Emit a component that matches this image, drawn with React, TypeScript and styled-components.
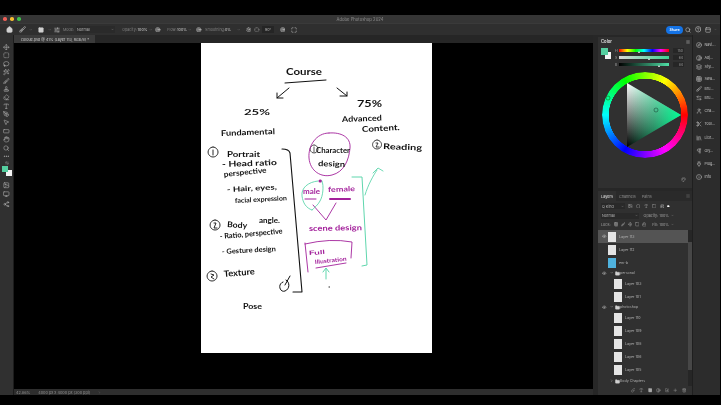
import React from 'react';
import styled, {createGlobalStyle} from 'styled-components';
import {
  Home, Brush, ChevronDown, ChevronRight, Search, CircleHelp, PanelTop, Settings, Move, SquareDashed, Lasso, Wand2,
  Stamp, Eraser, Type, PenTool, MousePointer2, RectangleHorizontal, Hand, Ellipsis, Share2, Monitor, Square, Eye,
  Folder, Compass, Contrast, Layers, Grid3x3, ArrowLeftRight, User, Scissors, Library, Pilcrow, Plug, Info, Menu,
  Image, Circle, Crosshair, Lock, Trash2, Plus, Link, FolderPlus, SlidersHorizontal, Palette, Target, Maximize, Printer
} from 'lucide-react';

const GlobalStyle = createGlobalStyle`
  html, body {
    margin: 0;
    padding: 0;
    background: #000;
    overflow: hidden;
  }
  * {
    box-sizing: border-box;
  }
`;

const Page = styled.div`
  width: 721px;
  height: 405px;
  padding: 15px 1px 10px 0;
  background: #000;
  font-family: 'Inter', 'Liberation Sans', sans-serif;
  font-size: 4.5px;
  color: #b4b4b4;
  filter: blur(0.4px);
`;

const AppWindow = styled.div`
  display: flex;
  flex-direction: column;
  width: 720px;
  height: 380px;
  background: #2e2e2e;
`;

const TitleBar = styled.div`
  display: flex;
  align-items: center;
  position: relative;
  height: 8px;
  padding-left: 3px;
  gap: 3.5px;
  background: #353535;
`;

const Light = styled.span<{$color: string}>`
  width: 3.5px;
  height: 3.5px;
  border-radius: 50%;
  background: ${({$color}) => $color};
`;

const WindowTitle = styled.span`
  position: absolute;
  left: 0;
  right: 0;
  text-align: center;
  color: #8e8e8e;
  font-size: 4.2px;
`;

const OptionsBar = styled.div`
  display: flex;
  align-items: center;
  height: 12px;
  background: #2f2f2f;
  border-top: 1px solid #3a3a3a;
`;

const OptionCell = styled.span<{$w: number; $bright?: boolean}>`
  display: flex;
  align-items: center;
  justify-content: center;
  flex: none;
  width: ${({$w}) => $w}px;
  color: ${({$bright}) => ($bright ? '#d0d0d0' : '#808080')};
  font-size: 3.7px;
  white-space: nowrap;
`;

const BlendSelect = styled.span`
  display: flex;
  align-items: center;
  justify-content: space-between;
  flex: none;
  width: 39px;
  height: 7px;
  padding: 0 1px;
  color: #b8b8b8;
  background: #2a2a2a;
  font-size: 3.7px;
`;

const AngleBox = styled(BlendSelect)`
  width: 12px;
  justify-content: center;
  background: #252525;
`;

const OptionsEnd = styled.div`
  display: flex;
  align-items: center;
  margin-left: auto;
  padding-right: 3px;
`;

const ShareButton = styled.span`
  display: flex;
  align-items: center;
  justify-content: center;
  width: 17px;
  height: 8px;
  border-radius: 4px;
  color: #fff;
  background: #1473e6;
  font-size: 3.6px;
  font-weight: 600;
`;

const Workspace = styled.div`
  display: flex;
  flex: 1;
  min-height: 0;
`;

const ToolBar = styled.div`
  display: flex;
  flex-direction: column;
  align-items: center;
  flex: none;
  width: 14px;
  padding-top: 8px;
  background: #303030;
  border-right: 1px solid #1c1c1c;
  color: #b4b4b4;
`;

const ToolSlot = styled.span<{$h?: number}>`
  display: flex;
  align-items: center;
  justify-content: center;
  flex: none;
  height: ${({$h}) => $h ?? 8.4}px;
`;

const ColorChips = styled.div`
  position: relative;
  flex: none;
  width: 10px;
  height: 11px;
  margin: 0 0 4px 0;
`;

const Chip = styled.span<{$back?: boolean}>`
  position: absolute;
  width: 6px;
  height: 6px;
  left: ${({$back}) => ($back ? 4 : 0)}px;
  top: ${({$back}) => ($back ? 4 : 0)}px;
  background: ${({$back}) => ($back ? '#f4f4f4' : '#55cfa0')};
  z-index: ${({$back}) => ($back ? 0 : 1)};
`;

const CenterColumn = styled.div`
  display: flex;
  flex-direction: column;
  flex: none;
  width: 579px;
`;

const TabStrip = styled.div`
  height: 8px;
  background: #262626;
`;

const DocTab = styled.div`
  display: flex;
  align-items: center;
  width: 81px;
  height: 8px;
  padding-left: 7px;
  color: #cfcfcf;
  background: #3b3b3b;
  font-size: 3.7px;
  white-space: nowrap;
`;

const Canvas = styled.div`
  flex: 1;
  min-height: 0;
  padding-left: 187px;
  background: #000;
`;

const Paper = styled.div`
  position: relative;
  width: 231px;
  height: 310px;
  background: #fff;
`;

const InkLayer = styled.svg`
  position: absolute;
  inset: 0;
  width: 231px;
  height: 310px;
  font-family: 'Lato', 'Liberation Sans', sans-serif;
  font-weight: 700;
`;

const StatusBar = styled.div`
  display: flex;
  align-items: center;
  flex: none;
  height: 6px;
  padding-left: 2px;
  gap: 8px;
  color: #8e8e8e;
  background: #2e2e2e;
  font-size: 3.8px;
`;

const RightColumn = styled.div`
  display: flex;
  flex: none;
  width: 127px;
  padding-left: 5px;
  background: #272727;
`;

const PanelColumn = styled.div`
  display: flex;
  flex-direction: column;
  flex: none;
  width: 94px;
  padding-top: 2px;
`;

const ColorPanel = styled.section`
  flex: none;
  height: 151px;
  margin-bottom: 3px;
  background: #303030;
`;

const PanelHeader = styled.div`
  display: flex;
  align-items: center;
  justify-content: space-between;
  height: 9px;
  padding: 0 2px 0 3px;
  color: #e0e0e0;
  font-size: 4.2px;
  font-weight: 600;
`;

const SwatchRow = styled.div`
  display: flex;
  height: 26px;
  padding: 2px 0 0 3px;
`;

const SwatchBox = styled.div`
  position: relative;
  flex: none;
  width: 11px;
  height: 11px;
`;

const BigChip = styled.span<{$back?: boolean}>`
  position: absolute;
  width: 6.5px;
  height: 6.5px;
  left: ${({$back}) => ($back ? 3.5 : 0)}px;
  top: ${({$back}) => ($back ? 4 : 0)}px;
  background: ${({$back}) => ($back ? '#f4f4f4' : '#55cfa0')};
  z-index: ${({$back}) => ($back ? 0 : 1)};
`;

const SliderStack = styled.div`
  display: flex;
  flex-direction: column;
  gap: 4px;
  margin-left: 3px;
  padding-top: 1px;
`;

const SliderRow = styled.div`
  display: flex;
  align-items: center;
  height: 3px;
  gap: 1px;
  font-size: 3.6px;
  color: #a0a0a0;
`;

const SliderLabel = styled.span`
  width: 3px;
`;

const SliderTrack = styled.div<{$fill: string}>`
  position: relative;
  width: 50px;
  height: 3px;
  background: ${({$fill}) => $fill};
`;

const SliderKnob = styled.span`
  position: absolute;
  top: 2px;
  width: 0;
  height: 0;
  border-left: 1.6px solid transparent;
  border-right: 1.6px solid transparent;
  border-bottom: 2.4px solid #eee;
  margin-left: -1.6px;
`;

const SliderValue = styled.span`
  display: flex;
  align-items: center;
  justify-content: flex-end;
  width: 11px;
  height: 5px;
  margin-left: 3px;
  padding-right: 1px;
  color: #9a9a9a;
  background: #262626;
  font-size: 3.4px;
`;

const WheelSlot = styled.div`
  position: relative;
  width: 86px;
  height: 86px;
  margin-left: 4px;
`;

const HueRing = styled.div`
  position: absolute;
  inset: 0;
  border-radius: 50%;
  background: conic-gradient(from 90deg, #f00, #f0f, #00f, #0ff, #0f0, #ff0, #f00);
  mask: radial-gradient(circle, transparent 36px, #000 36.5px);
`;

const WheelDrawing = styled.svg`
  position: absolute;
  inset: 0;
  width: 86px;
  height: 86px;
`;

const CornerIcon = styled.div`
  display: flex;
  justify-content: flex-end;
  padding: 19px 6px 0 0;
  color: #8a8a8a;
`;

const LayersPanel = styled.section`
  display: flex;
  flex-direction: column;
  flex: 1;
  min-height: 0;
  background: #303030;
`;

const LayerTabs = styled.div`
  display: flex;
  align-items: center;
  flex: none;
  height: 10px;
  padding-right: 2px;
  background: #2a2a2a;
`;

const LayerTab = styled.span<{$active?: boolean}>`
  display: flex;
  align-items: center;
  height: 10px;
  padding: 0 3px;
  color: ${({$active}) => ($active ? '#e4e4e4' : '#8e8e8e')};
  background: ${({$active}) => ($active ? '#303030' : 'transparent')};
  font-size: 3.8px;
`;

const PanelMenu = styled.span`
  display: flex;
  margin-left: auto;
  color: #8a8a8a;
`;

const ControlRow = styled.div<{$h: number}>`
  display: flex;
  align-items: center;
  flex: none;
  height: ${({$h}) => $h}px;
  padding: 0 3px;
  gap: 3px;
  color: #a0a0a0;
  font-size: 3.7px;
`;

const MiniSelect = styled.span<{$w: number}>`
  display: flex;
  align-items: center;
  justify-content: space-between;
  flex: none;
  width: ${({$w}) => $w}px;
  height: 6px;
  padding: 0 1px;
  color: #b8b8b8;
  background: #292929;
`;

const RowTools = styled.span<{$gap: number}>`
  display: flex;
  align-items: center;
  gap: ${({$gap}) => $gap}px;
  color: #b0b0b0;
`;

const ControlEnd = styled.span`
  display: flex;
  align-items: center;
  gap: 2px;
  margin-left: auto;
  padding-right: 15px;
`;

const LayerBody = styled.div`
  display: flex;
  flex: 1;
  min-height: 0;
  margin-top: 1px;
`;

const LayerList = styled.div`
  flex: none;
  width: 90px;
`;

const LayerRowBox = styled.div<{$selected?: boolean; $depth: number}>`
  display: flex;
  align-items: center;
  height: 13px;
  padding-left: ${({$depth}) => $depth}px;
  background: ${({$selected}) => ($selected ? '#545454' : 'transparent')};
  color: #b4b4b4;
  font-size: 3.6px;
`;

const GroupRow = styled.div<{$tall?: boolean}>`
  display: flex;
  align-items: center;
  height: ${({$tall}) => ($tall ? 10 : 8)}px;
  padding-left: 3px;
  color: #b0b0b0;
  font-size: 3.6px;
`;

const EyeSlot = styled.span`
  display: flex;
  justify-content: center;
  flex: none;
  width: 7px;
  color: #c8c8c8;
`;

const Thumb = styled.span<{$blue?: boolean}>`
  flex: none;
  width: 8px;
  height: 10px;
  margin-right: 3px;
  background: ${({$blue}) => ($blue ? '#4fb2de' : '#e4e4e4')};
`;

const FolderSlot = styled.span`
  display: flex;
  align-items: center;
  flex: none;
  gap: 1px;
  width: 12px;
  padding-left: 2px;
  color: #d0d0d0;
`;

const ScrollTrack = styled.div`
  flex: none;
  width: 4px;
  padding-top: 12px;
  background: #262626;
`;

const ScrollThumb = styled.div`
  height: 128px;
  background: #474747;
`;

const LayerFooter = styled.div`
  display: flex;
  align-items: center;
  justify-content: flex-end;
  flex: none;
  height: 9px;
  padding-right: 6px;
  gap: 4px;
  color: #a8a8a8;
`;

const Dock = styled.div`
  display: flex;
  flex-direction: column;
  flex: none;
  width: 28px;
  padding: 7px 0 0 3px;
  background: #2c2c2c;
  border-left: 1px solid #1f1f1f;
`;

const DockItem = styled.div<{$h: number}>`
  display: flex;
  align-items: flex-start;
  flex: none;
  height: ${({$h}) => $h}px;
  gap: 2.5px;
  color: #c0c0c0;
  font-size: 3.7px;
  line-height: 6px;
`;

const tools = [Move, SquareDashed, Lasso, Wand2, Brush, Stamp, Eraser, Type, PenTool, MousePointer2, RectangleHorizontal, Hand, Search, Ellipsis];

const dockItems: Array<{icon: typeof Move; label: string; h: number}> = [
  {icon: Compass, label: 'Navi...', h: 13},
  {icon: Contrast, label: 'Adj...', h: 9},
  {icon: Layers, label: 'Styl...', h: 12},
  {icon: Grid3x3, label: 'Swa...', h: 10},
  {icon: Brush, label: 'Bru...', h: 9},
  {icon: ArrowLeftRight, label: 'Bru...', h: 13},
  {icon: User, label: 'Cha...', h: 13},
  {icon: Scissors, label: 'Tool...', h: 14},
  {icon: Library, label: 'Libr...', h: 13},
  {icon: Pilcrow, label: 'Gly...', h: 13},
  {icon: Plug, label: 'Plug...', h: 13},
  {icon: Info, label: 'Info', h: 13}
];

type LayerEntry = {label: string; eye?: boolean; selected?: boolean; blue?: boolean; depth?: number; group?: boolean; collapsed?: boolean; tall?: boolean};

const layerEntries: LayerEntry[] = [
  {label: 'Layer 113', eye: true, selected: true},
  {label: 'Layer 112'},
  {label: 'em-b', blue: true},
  {label: 'personal', eye: true, group: true},
  {label: 'Layer 103', depth: 1},
  {label: 'Layer 101', depth: 1},
  {label: 'photoshop', eye: true, group: true},
  {label: 'Layer 110', depth: 1},
  {label: 'Layer 109', depth: 1},
  {label: 'Layer 108', depth: 1},
  {label: 'Layer 106', depth: 1},
  {label: 'Layer 105', depth: 1},
  {label: 'Body Chapters', group: true, collapsed: true, tall: true}
];

const BLACK = '#111';
const PURPLE = '#a3219b';
const GREEN = '#5fd6ad';

// coordinates are taken in screen pixels, the viewBox shifts them onto the sheet
const notes: Array<{t: string; x: number; y: number; w: number; s: number; r?: number; c?: string}> = [
  {t: 'Course', x: 286, y: 75, w: 36, s: 10},
  {t: '25%', x: 244, y: 115, w: 26, s: 9},
  {t: '75%', x: 357, y: 107, w: 25, s: 10},
  {t: 'Fundamental', x: 221, y: 136, w: 54, s: 9, r: -2},
  {t: 'Advanced', x: 342, y: 122, w: 40, s: 9, r: -2},
  {t: 'Content.', x: 362, y: 132, w: 38, s: 9, r: -3},
  {t: 'Portrait', x: 227, y: 157, w: 33, s: 9},
  {t: '- Head ratio', x: 222, y: 167, w: 55, s: 9, r: -2},
  {t: 'perspective', x: 224, y: 177, w: 43, s: 8.5, r: -6},
  {t: '- Hair, eyes,', x: 227, y: 192, w: 50, s: 8, r: -3},
  {t: 'facial expression', x: 235, y: 203, w: 52, s: 7.5, r: -3},
  {t: 'Body', x: 227, y: 227, w: 20, s: 9, r: 4},
  {t: 'angle.', x: 259, y: 223, w: 21, s: 8},
  {t: '- Ratio, perspective', x: 220, y: 239, w: 63, s: 8.5, r: -5},
  {t: '- Gesture design', x: 222, y: 254, w: 54, s: 8, r: -3},
  {t: 'Texture', x: 224, y: 277, w: 31, s: 10, r: -5},
  {t: 'Pose', x: 243, y: 309, w: 19, s: 7.5},
  {t: 'Character', x: 316, y: 153, w: 34, s: 8},
  {t: 'design', x: 318, y: 166, w: 27, s: 8.5, r: 2},
  {t: 'Reading', x: 383, y: 149, w: 39, s: 9, r: 2},
  {t: 'male', x: 303, y: 194, w: 17, s: 7.5, c: PURPLE},
  {t: 'female', x: 328, y: 192, w: 27, s: 8, c: PURPLE, r: -2},
  {t: 'scene design', x: 309, y: 231, w: 53, s: 8.5, c: PURPLE, r: -1},
  {t: 'Full', x: 309, y: 255, w: 16, s: 6.5, c: PURPLE, r: -4},
  {t: 'Illustration', x: 315, y: 264, w: 32, s: 6.5, c: PURPLE, r: -6}
];

const strokes: Array<{d: string; c: string; w?: number}> = [
  {d: 'M285 83 L326 80', c: BLACK},
  {d: 'M289 88 L277 98 M277 93 L277 98 L283 98', c: BLACK},
  {d: 'M337 88 L347 96 M347 92 L347 96 L340 96', c: BLACK},
  {d: 'M282 149 Q289 149 290 153 L302 292 L293 292', c: BLACK, w: 1.1},
  {d: 'M290 276 L285 285 M283 282 C277 284 280 293 285 291 C290 289 290 282 286 280', c: BLACK, w: 1},
  {d: 'M213 147 A5 5 0 1 0 213.1 147 M213 150 L213 155', c: BLACK, w: 0.9},
  {d: 'M215 220 A5 5 0 1 0 215.1 220 M214 223 L216 223 L214 228 L217 228', c: BLACK, w: 0.9},
  {d: 'M212 271 A5 5 0 1 0 212.1 271 M211 274 L214 275 L211 277 L214 279', c: BLACK, w: 0.9},
  {d: 'M377 140 A4.5 4.5 0 1 0 377.1 140 M376 143 L378 143 L376 147 L379 147', c: BLACK, w: 0.8},
  {d: 'M314 145 A4 4 0 1 0 314.1 145 M314 147 L314 152', c: BLACK, w: 0.7},
  {d: 'M329 133 C316 133 308 146 309 158 C310 171 321 178 332 175 C344 172 349 160 350 148 C351 137 341 132 329 133', c: PURPLE, w: 0.9},
  {d: 'M305 199 L316 199', c: PURPLE, w: 1},
  {d: 'M330 199 L350 199', c: PURPLE, w: 2},
  {d: 'M313 205 L326 220 L336 203', c: PURPLE, w: 0.9},
  {d: 'M320 181 L320.5 181', c: PURPLE, w: 3},
  {d: 'M305 244 Q330 238 352 242 L351 258 M305 243 L308 272 M316 268 L346 263', c: PURPLE, w: 0.9},
  {d: 'M318 181 C308 182 301 188 302 196 C303 203 306 208 312 210', c: GREEN, w: 0.9},
  {d: 'M322 181 C324 186 323 196 320 201 C318 205 314 208 312 210', c: GREEN, w: 0.9},
  {d: 'M352 177 L362 177 L367 265 L362 266', c: GREEN, w: 1},
  {d: 'M365 195 C368 185 373 176 377 170 M373 173 L378 168 L383 171', c: GREEN, w: 0.9},
  {d: 'M326 279 L326 269 M323 272 L326 268 L329 272', c: GREEN, w: 1},
  {d: 'M329 287 L329.5 287', c: BLACK, w: 1}
];

const Ink: React.FunctionComponent = () => (
  <InkLayer viewBox="201 43 231 310">
    {strokes.map((s, i) => (
      <path key={i} d={s.d} stroke={s.c} strokeWidth={s.w ?? 1} fill="none" strokeLinecap="round" strokeLinejoin="round" />
    ))}
    {notes.map((n) => (
      <text
        key={n.t}
        x={n.x}
        y={n.y}
        fontSize={n.s * 0.88}
        fill={n.c ?? BLACK}
        textLength={n.w}
        lengthAdjust="spacingAndGlyphs"
        transform={n.r ? `rotate(${n.r} ${n.x} ${n.y})` : undefined}
      >
        {n.t}
      </text>
    ))}
  </InkLayer>
);

const ColorWheel: React.FunctionComponent = () => (
  <WheelSlot>
    <HueRing />
    <WheelDrawing viewBox="0 0 86 86">
      <defs>
        <linearGradient id="valueRamp" x1="0" y1="0" x2="0" y2="1">
          <stop offset="0" stopColor="#fff" />
          <stop offset="1" stopColor="#000" />
        </linearGradient>
        <linearGradient id="hueRamp" x1="0" y1="0" x2="1" y2="0">
          <stop offset="0" stopColor="#00ff95" stopOpacity="0" />
          <stop offset="0.5" stopColor="#00e888" stopOpacity="0.45" />
          <stop offset="1" stopColor="#00ff95" />
        </linearGradient>
      </defs>
      <polygon points="25,11 79,43 25,75" fill="url(#valueRamp)" />
      <polygon points="25,11 79,43 25,75" fill="url(#hueRamp)" />
      <circle cx="54" cy="38" r="2" fill="none" stroke="#1b4d3a" strokeWidth="0.6" />
      <circle cx="6" cy="26" r="2" fill="none" stroke="#1a6b1a" strokeWidth="0.6" />
    </WheelDrawing>
  </WheelSlot>
);

const LayerItem: React.FunctionComponent<{entry: LayerEntry}> = ({entry}) => {
  const eye = <EyeSlot>{entry.eye && <Eye size={4.5} />}</EyeSlot>;
  if (entry.group) {
    return (
      <GroupRow $tall={entry.tall}>
        {eye}
        <FolderSlot>
          {entry.collapsed ? <ChevronRight size={3.5} /> : <ChevronDown size={3.5} />}
          <Folder size={5} fill="currentColor" />
        </FolderSlot>
        {entry.label}
      </GroupRow>
    );
  }
  return (
    <LayerRowBox $selected={entry.selected} $depth={entry.depth ? 9 : 3}>
      {eye}
      <Thumb $blue={entry.blue} />
      {entry.label}
    </LayerRowBox>
  );
};

const App: React.FunctionComponent = () => (
  <Page>
    <GlobalStyle />
    <AppWindow>
      <TitleBar>
        <Light $color="#ee5f57" />
        <Light $color="#f5bd30" />
        <Light $color="#3fc24b" />
        <WindowTitle>Adobe Photoshop 2024</WindowTitle>
      </TitleBar>
      <OptionsBar>
        <OptionCell $w={18} $bright><Home size={7} fill="currentColor" /></OptionCell>
        <OptionCell $w={9} $bright><Brush size={7} /></OptionCell>
        <OptionCell $w={7}><ChevronDown size={3.5} /></OptionCell>
        <OptionCell $w={13} $bright><Square size={6} fill="currentColor" /></OptionCell>
        <OptionCell $w={5}><ChevronDown size={3.5} /></OptionCell>
        <OptionCell $w={9} $bright><SlidersHorizontal size={6} /></OptionCell>
        <OptionCell $w={15}>Mode:</OptionCell>
        <BlendSelect>Normal<ChevronDown size={3} /></BlendSelect>
        <OptionCell $w={7} />
        <OptionCell $w={15}>Opacity:</OptionCell>
        <OptionCell $w={11} $bright>100%</OptionCell>
        <OptionCell $w={6}><ChevronDown size={3.5} /></OptionCell>
        <OptionCell $w={8} $bright><Target size={5.5} /></OptionCell>
        <OptionCell $w={5} />
        <OptionCell $w={10}>Flow:</OptionCell>
        <OptionCell $w={10} $bright>100%</OptionCell>
        <OptionCell $w={5}><ChevronDown size={3.5} /></OptionCell>
        <OptionCell $w={14} $bright><Target size={5.5} /></OptionCell>
        <OptionCell $w={1} />
        <OptionCell $w={16}>Smoothing:</OptionCell>
        <OptionCell $w={10} $bright>0%</OptionCell>
        <OptionCell $w={12}><ChevronDown size={3.5} /></OptionCell>
        <OptionCell $w={7} $bright><Settings size={5.5} /></OptionCell>
        <OptionCell $w={10}><Crosshair size={5.5} /></OptionCell>
        <AngleBox>90°</AngleBox>
        <OptionCell $w={17} $bright><Target size={5.5} /></OptionCell>
        <OptionCell $w={6} $bright><Maximize size={6} /></OptionCell>
        <OptionsEnd>
          <ShareButton>Share</ShareButton>
          <OptionCell $w={10} $bright><Search size={6} /></OptionCell>
          <OptionCell $w={10} $bright><CircleHelp size={6.5} /></OptionCell>
          <OptionCell $w={10} $bright><PanelTop size={6} /></OptionCell>
          <OptionCell $w={4}><ChevronDown size={3} /></OptionCell>
        </OptionsEnd>
      </OptionsBar>
      <Workspace>
        <ToolBar>
          {tools.map((Icon, i) => (
            <ToolSlot key={i}><Icon size={6.5} /></ToolSlot>
          ))}
          <ToolSlot $h={6}><ArrowLeftRight size={4} /></ToolSlot>
          <ColorChips>
            <Chip />
            <Chip $back />
          </ColorChips>
          <ToolSlot><Image size={6.5} /></ToolSlot>
          <ToolSlot><Monitor size={6.5} /></ToolSlot>
          <ToolSlot $h={11}><Share2 size={6.5} /></ToolSlot>
        </ToolBar>
        <CenterColumn>
          <TabStrip>
            <DocTab>coloue.psd @ 41% (Layer 113, RGB/8) *</DocTab>
          </TabStrip>
          <Canvas>
            <Paper>
              <Ink />
            </Paper>
          </Canvas>
          <StatusBar>
            <span>42.86%</span>
            <span>4000 px x 4000 px (300 ppi)</span>
            <ChevronRight size={3} />
          </StatusBar>
        </CenterColumn>
        <RightColumn>
          <PanelColumn>
            <ColorPanel>
              <PanelHeader>Color<Menu size={4} /></PanelHeader>
              <SwatchRow>
                <SwatchBox>
                  <BigChip />
                  <BigChip $back />
                </SwatchBox>
                <SliderStack>
                  <SliderRow>
                    <SliderLabel>H</SliderLabel>
                    <SliderTrack $fill="linear-gradient(90deg,#f00,#ff0,#0f0,#0ff,#00f,#f0f,#f00)">
                      <SliderKnob style={{left: '42%'}} />
                    </SliderTrack>
                    <SliderValue>150</SliderValue>
                  </SliderRow>
                  <SliderRow>
                    <SliderLabel>S</SliderLabel>
                    <SliderTrack $fill="linear-gradient(90deg,#d8d8d8,#3bd493)">
                      <SliderKnob style={{left: '62%'}} />
                    </SliderTrack>
                    <SliderValue>64</SliderValue>
                  </SliderRow>
                  <SliderRow>
                    <SliderLabel>B</SliderLabel>
                    <SliderTrack $fill="linear-gradient(90deg,#000,#4fe0a6)">
                      <SliderKnob style={{left: '82%'}} />
                    </SliderTrack>
                    <SliderValue>84</SliderValue>
                  </SliderRow>
                </SliderStack>
              </SwatchRow>
              <ColorWheel />
              <CornerIcon><Palette size={5} /></CornerIcon>
            </ColorPanel>
            <LayersPanel>
              <LayerTabs>
                <LayerTab $active>Layers</LayerTab>
                <LayerTab>Channels</LayerTab>
                <LayerTab>Paths</LayerTab>
                <PanelMenu><Menu size={4} /></PanelMenu>
              </LayerTabs>
              <ControlRow $h={10}>
                <MiniSelect $w={24}>Q Kind<ChevronDown size={3} /></MiniSelect>
                <RowTools $gap={3.4}>
                  <Image size={4.5} />
                  <Circle size={4.5} />
                  <Type size={4.5} />
                  <Square size={4.5} />
                  <Printer size={4.5} />
                  <Circle size={2.5} fill="#fff" color="#fff" />
                </RowTools>
              </ControlRow>
              <ControlRow $h={9}>
                <MiniSelect $w={38}>Normal<ChevronDown size={3} /></MiniSelect>
                <ControlEnd>Opacity: 100%<ChevronDown size={3} /></ControlEnd>
              </ControlRow>
              <ControlRow $h={9}>
                Lock:
                <RowTools $gap={2.6}>
                  <Grid3x3 size={4.5} />
                  <Brush size={4.5} />
                  <Move size={4.5} />
                  <Square size={4.5} />
                  <Lock size={4.5} />
                </RowTools>
                <ControlEnd>Fill: 100%<ChevronDown size={3} /></ControlEnd>
              </ControlRow>
              <LayerBody>
                <LayerList>
                  {layerEntries.map((entry) => (
                    <LayerItem key={entry.label} entry={entry} />
                  ))}
                </LayerList>
                <ScrollTrack>
                  <ScrollThumb />
                </ScrollTrack>
              </LayerBody>
              <LayerFooter>
                <Link size={4.5} />
                <Type size={4.5} />
                <Square size={4.5} fill="currentColor" />
                <Contrast size={4.5} />
                <FolderPlus size={4.5} />
                <Plus size={4.5} />
                <Trash2 size={4.5} />
              </LayerFooter>
            </LayersPanel>
          </PanelColumn>
          <Dock>
            {dockItems.map(({icon: Icon, label, h}, i) => (
              <DockItem key={i} $h={h}>
                <Icon size={6} />
                {label}
              </DockItem>
            ))}
          </Dock>
        </RightColumn>
      </Workspace>
    </AppWindow>
  </Page>
);

export default App;
